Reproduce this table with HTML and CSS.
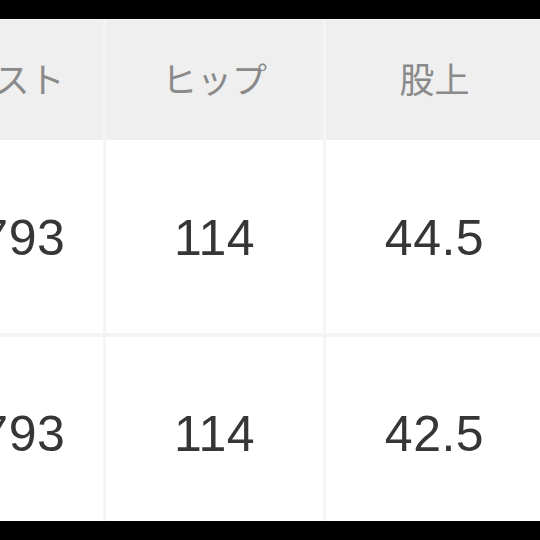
FILE: index.html
```html
<!DOCTYPE html>
<html lang="ja">
<head>
<meta charset="utf-8">
<link rel="stylesheet" href="styles.css">
</head>
<body>
<div class="frame">
  <div class="table">
    <div class="row head">
      <div class="cell">ウエスト</div>
      <div class="cell">ヒップ</div>
      <div class="cell">股上</div>
      <div class="cell">股下</div>
    </div>
    <div class="row body r1">
      <div class="cell">66793</div>
      <div class="cell">114</div>
      <div class="cell">44.5</div>
      <div class="cell">78</div>
    </div>
    <div class="row body r2">
      <div class="cell">66793</div>
      <div class="cell">114</div>
      <div class="cell">42.5</div>
      <div class="cell">78</div>
    </div>
  </div>
</div>
</body>
</html>
```
FILE: styles.css
```css
html, body {
  margin: 0;
  padding: 0;
  background: #000;
  width: 540px;
  height: 540px;
  overflow: hidden;
}
.frame {
  padding-top: 19px;
  height: 540px;
  box-sizing: border-box;
  overflow: hidden;
}
.table {
  margin-left: -117px;
  width: 880px;
  background: #fff;
  border-top: 1px solid #f7f7f7;
}
.row {
  display: grid;
  grid-template-columns: repeat(4, 220px);
}
.cell {
  display: flex;
  align-items: center;
  justify-content: center;
  border-left: 3px solid #f5f5f5;
  white-space: nowrap;
}
.head {
  height: 120px;
  background: #efefef;
}
.head .cell {
  border-left-color: #f4f4f4;
  padding-bottom: 6px;
  font-family: "Noto Sans CJK JP", "Noto Sans", sans-serif;
  font-size: 35px;
  color: #8a8a8a;
}
.body .cell {
  font-family: "Liberation Sans", Arial, sans-serif;
  font-size: 50px;
  color: #363636;
  letter-spacing: 0.5px;
}
.r1 {
  height: 193px;
  border-bottom: 4px solid #f4f4f4;
}
.r1 .cell {
  padding-top: 3px;
}
.r2 {
  height: 184px;
}
.r2 .cell {
  padding-top: 10px;
}
```
